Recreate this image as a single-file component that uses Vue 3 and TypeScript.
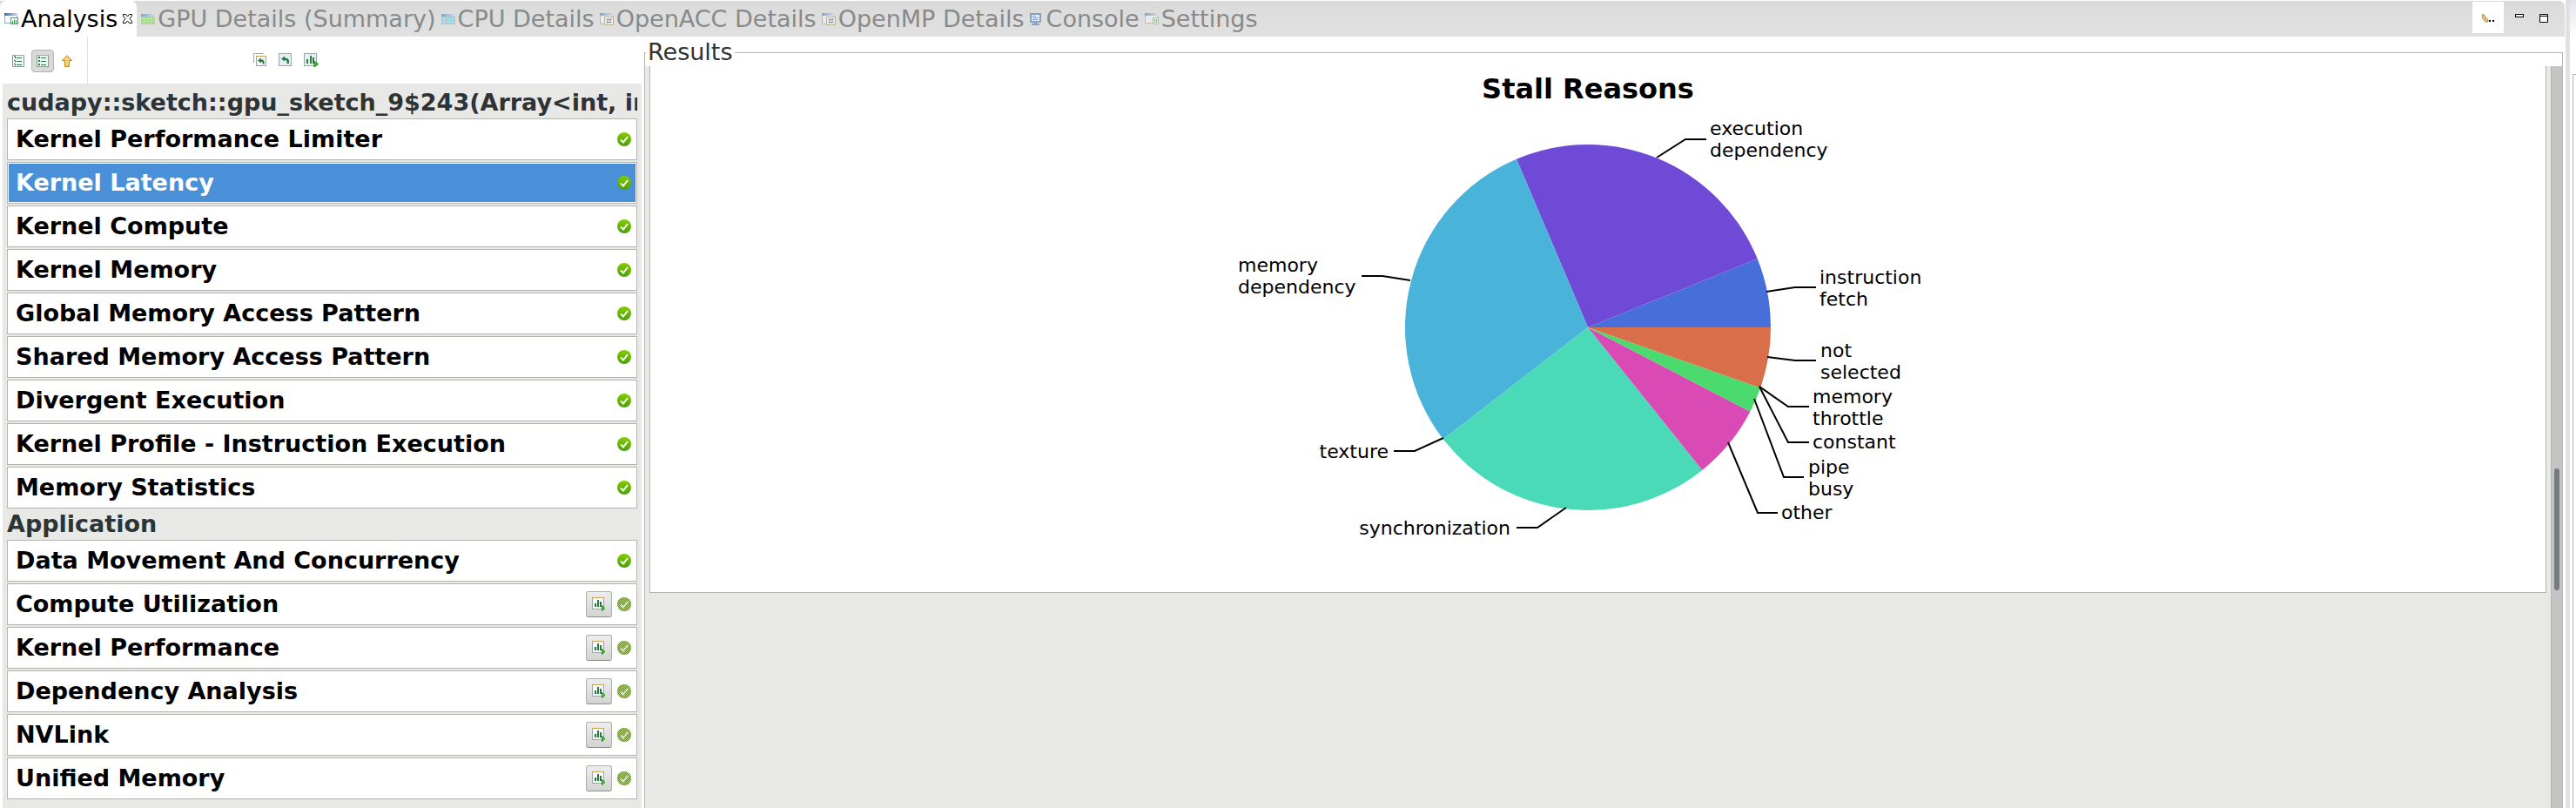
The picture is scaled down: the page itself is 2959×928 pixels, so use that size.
<script setup lang="ts">
import { ref } from 'vue'

type TabIcon = 'analysis' | 'gpu' | 'cpu' | 'hash' | 'console' | 'settings'
interface Tab { label: string; icon: TabIcon }
interface Stage { label: string; done: boolean }
interface Slice { from: number; to: number; color: string }
interface Callout { lines: string[]; points: string; x: number; y: number; end?: boolean }

const tabs: Tab[] = [
  { label: 'Analysis', icon: 'analysis' },
  { label: 'GPU Details (Summary)', icon: 'gpu' },
  { label: 'CPU Details', icon: 'cpu' },
  { label: 'OpenACC Details', icon: 'hash' },
  { label: 'OpenMP Details', icon: 'hash' },
  { label: 'Console', icon: 'console' },
  { label: 'Settings', icon: 'settings' },
]

const groups: { title: string; stages: Stage[] }[] = [
  {
    title: 'cudapy::sketch::gpu_sketch_9$243(Array<int, in',
    stages: [
      'Kernel Performance Limiter', 'Kernel Latency', 'Kernel Compute', 'Kernel Memory',
      'Global Memory Access Pattern', 'Shared Memory Access Pattern', 'Divergent Execution',
      'Kernel Profile - Instruction Execution', 'Memory Statistics',
    ].map(label => ({ label, done: true })),
  },
  {
    title: 'Application',
    stages: [
      { label: 'Data Movement And Concurrency', done: true },
      { label: 'Compute Utilization', done: false },
      { label: 'Kernel Performance', done: false },
      { label: 'Dependency Analysis', done: false },
      { label: 'NVLink', done: false },
      { label: 'Unified Memory', done: false },
    ],
  },
]

const selected = ref('Kernel Latency')

const cx = 424
const cy = 300
const radius = 210

// Angles run counter-clockwise from three o'clock, in degrees.
const slices: Slice[] = [
  { from: 0, to: 22, color: '#486ed9' },
  { from: 22, to: 113, color: '#6e4ad7' },
  { from: 113, to: 217.7, color: '#4ab3da' },
  { from: 217.7, to: 308.7, color: '#4adab7' },
  { from: 308.7, to: 332.6, color: '#da4ab5' },
  { from: 332.6, to: 340.7, color: '#4ada6e' },
  { from: 340.7, to: 360, color: '#d96e4a' },
]

const callouts: Callout[] = [
  { lines: ['execution', 'dependency'], points: '503,105 536,84 560,84', x: 564, y: 79 },
  { lines: ['instruction', 'fetch'], points: '629,259 662,254 686,254', x: 690, y: 250 },
  { lines: ['not', 'selected'], points: '630,334 662,338 686,338', x: 691, y: 334 },
  { lines: ['memory', 'throttle'], points: '621,368 654,391 678,391', x: 682, y: 387 },
  { lines: ['constant'], points: '621,368 654,432 678,432', x: 682, y: 439 },
  { lines: ['pipe', 'busy'], points: '615,382 649,472 672,472', x: 677, y: 468 },
  { lines: ['other'], points: '585,432 619,513 642,513', x: 646, y: 520 },
  { lines: ['synchronization'], points: '399,507 366,530 342,530', x: 335, y: 538, end: true },
  { lines: ['texture'], points: '258,427 225,442 201,442', x: 195, y: 450, end: true },
  { lines: ['memory', 'dependency'], points: '220,246 188,241 164,241', x: 22, y: 236 },
]

function wedge(s: Slice): string {
  const at = (deg: number) => {
    const a = (deg * Math.PI) / 180
    return `${(cx + radius * Math.cos(a)).toFixed(2)} ${(cy - radius * Math.sin(a)).toFixed(2)}`
  }
  return `M${cx} ${cy}L${at(s.from)}A${radius} ${radius} 0 0 0 ${at(s.to)}Z`
}
</script>

<template>
  <div class="window">
    <svg class="defs" width="0" height="0" aria-hidden="true">
      <defs>
        <linearGradient id="caption" x1="0" x2="1" y1="0" y2="0">
          <stop offset="0" stop-color="#2f68b0" />
          <stop offset="1" stop-color="#c9dff2" />
        </linearGradient>
        <linearGradient id="done" x1="0" x2="0" y1="0" y2="1">
          <stop offset="0" stop-color="#86cc00" />
          <stop offset="1" stop-color="#4a9f0a" />
        </linearGradient>
        <pattern id="dither" width="2" height="2" patternUnits="userSpaceOnUse">
          <rect width="1" height="1" fill="#c4c9b8" />
          <rect x="1" y="1" width="1" height="1" fill="#c4c9b8" />
        </pattern>
      </defs>
    </svg>
    <section class="folder">
      <header class="strip">
        <nav class="tabs">
          <button v-for="(t, i) in tabs" :key="t.label" type="button" class="tab" :class="{ active: i === 0 }">
            <svg class="icon" viewBox="0 0 16 14" aria-hidden="true">
              <g v-if="t.icon === 'analysis'">
                <rect x="0.5" y="1.5" width="14" height="10" fill="#f2f9ff" stroke="#8fb3c4" />
                <rect width="15" height="3" fill="url(#caption)" />
                <rect x="7.500" y="5.500" width="8" height="7" fill="#fff" stroke="#7d868e" />
                <path d="M9.500 12V9M11.500 12V7.500M13.500 12V8" stroke="#2f9f4a" fill="none" />
              </g>
              <g v-else-if="t.icon === 'settings'">
                <rect x="0.5" y="1.500" width="14" height="10" fill="#f2f9ff" stroke="#a8a890" />
                <rect width="15" height="3" fill="url(#caption)" />
                <rect x="9.500" y="5.500" width="6" height="7" fill="#fff" stroke="#8d8d78" />
                <path d="M11.500 11V7M13.500 11V7" stroke="#2f9f4a" fill="none" />
              </g>
              <g v-else-if="t.icon === 'gpu'">
                <rect width="16" height="3" y="1" fill="url(#caption)" />
                <rect width="16" height="9" y="4" fill="#5fe028" />
                <path d="M0 6.500H16M0 9.500H16M3.500 4V13M7.500 4V13M11.500 4V13" stroke="#b9d890" />
              </g>
              <g v-else-if="t.icon === 'cpu'">
                <rect width="16" height="3" y="1" fill="url(#caption)" />
                <rect x="0.500" y="4.500" width="15" height="8" fill="#6fdcf8" stroke="#8d9c98" />
                <path d="M0 8.500H16M5.500 4V13M10.500 4V13" stroke="#a3aaa0" />
              </g>
              <g v-else-if="t.icon === 'hash'">
                <rect x="0.500" y="1.500" width="14" height="11" fill="#f6f9fb" stroke="#a39a70" />
                <rect width="15" height="3" fill="url(#caption)" />
                <rect x="5.500" y="4.500" width="10" height="9" fill="#fff" stroke="#9a8448" />
                <path d="M9.500 6L8.500 12M12.500 6L11.500 12M7.500 7.500H13.500M7.500 10.500H13.500" stroke="#555" fill="none" />
              </g>
              <g v-else>
                <rect x="1" y="1" width="11" height="9" fill="#fff" stroke="#3563ad" stroke-width="2" />
                <path d="M3 3.500H7M3 5.500H10M3 7.500H9" stroke="#3563ad" />
                <path d="M5 11H8V12H11V14H2V12H5Z" fill="#3563ad" />
              </g>
            </svg>
            <span>{{ t.label }}</span>
            <svg v-if="i === 0" class="close" viewBox="0 0 11 11" aria-hidden="true">
              <path d="M.5.500H3.500L5.500 3L7.500.500H10.500V2.500L8 5.500L10.500 8.500V10.500H7.500L5.500 8L3.500 10.500H.5V8.500L3 5.500L.5 2.500Z" fill="#fff" stroke="#000" />
            </svg>
          </button>
        </nav>
        <div class="controls">
          <button type="button" class="pencil" aria-label="View menu">
            <svg viewBox="0 0 15 11" width="15" height="11">
              <path d="M0 0L2 1L7 7V9H4L0 4Z" fill="#e9c37a" stroke="#8a6427" stroke-width="0.700" />
              <rect x="8" y="7" width="2" height="2" /><rect x="12" y="7" width="2" height="2" />
            </svg>
          </button>
          <button type="button" aria-label="Minimize">
            <svg viewBox="0 0 10 10" width="10" height="10"><rect x="0.500" y="0.500" width="9" height="3" fill="#fff" stroke="#000" /></svg>
          </button>
          <button type="button" aria-label="Maximize">
            <svg viewBox="0 0 10 10" width="10" height="10"><path d="M.5.500H9.500V9.500H.5ZM.5 2.500H9.500" fill="#fff" stroke="#000" /></svg>
          </button>
        </div>
      </header>

      <div class="body">
        <aside class="side">
          <div class="toolbar">
            <div class="tools modes">
              <button type="button" aria-label="Guided analysis">
                <svg viewBox="0 0 14 14" width="14" height="14">
                  <rect x="0.500" y="0.500" width="13" height="13" fill="#eef5fc" stroke="#8e9c98" /><path d="M0 .5H14" stroke="#c5a75a" />
                  <path d="M5 3.500H11M5 7.500H11M5 11.500H11" stroke="#2e7d3c" /><path d="M2 1.500H3.500V4.500M2 6.500H3.500V8.500M2 10.500H3.500V12.500" stroke="#2e7d3c" fill="none" />
                </svg>
              </button>
              <button type="button" class="pressed" aria-label="Unguided analysis" aria-pressed="true">
                <svg viewBox="0 0 14 14" width="14" height="14">
                  <rect x="0.500" y="0.500" width="13" height="13" fill="#eef5fc" stroke="#8e9c98" /><path d="M0 .5H14" stroke="#c5a75a" />
                  <path d="M5 3.500H11M5 7.500H11M5 11.500H11" stroke="#2e7d3c" /><path d="M2 3H4M2 7H4M2 11H4" stroke="#2e7d3c" stroke-width="2" />
                </svg>
              </button>
              <button type="button" aria-label="Up">
                <svg viewBox="0 0 14 14" width="14" height="14">
                  <path d="M7 .7L12.500 6.500H9.500V13.500H4.500V6.500H1.500Z" fill="#fbd26a" stroke="#b9842a" />
                </svg>
              </button>
            </div>
            <div class="tools actions">
              <button type="button" aria-label="Reset all">
                <svg viewBox="0 0 16 16" width="16" height="16">
                  <path d="M.5 11V.5H11.500" fill="none" stroke="#c5a75a" /><rect x="3.500" y="3.500" width="11" height="11" fill="#eef5fc" stroke="#9aa6a8" /><path d="M3 3.500H15" stroke="#c5a75a" />
                  <path d="M5 8.500L9 5.500V7.500C12 7.500 13 9 12.500 12.500H10.500C11 10.500 10.500 9.700 9 9.700V11.500Z" fill="#2a7a3a" />
                </svg>
              </button>
              <button type="button" aria-label="Reset">
                <svg viewBox="0 0 16 16" width="16" height="16">
                  <rect x="0.500" y="0.500" width="14" height="14" fill="#e4effa" stroke="#9aa6a8" /><path d="M0 .5H15" stroke="#c5a75a" />
                  <path d="M3 6.500L7 3.500V5.500C11 5.500 12.500 7.500 12 12H9.500C10 9 9.500 8 7 8V9.500Z" fill="#2a7a3a" />
                </svg>
              </button>
              <button type="button" aria-label="Run analysis">
                <svg viewBox="0 0 17 17" width="17" height="17">
                  <rect x="0.500" y="0.500" width="14" height="14" fill="#e4effa" stroke="#9aa6a8" /><path d="M0 .5H15" stroke="#c5a75a" />
                  <path d="M4 12V7M8 12V3M11 12V5" stroke="#2a7a3a" stroke-width="2" /><path d="M12 9.500L16.500 12.500L12 16Z" fill="#3fc41c" stroke="#1c8c1c" />
                </svg>
              </button>
            </div>
          </div>

          <div class="stages">
            <template v-for="g in groups" :key="g.title">
              <h2 class="heading">{{ g.title }}</h2>
              <ul class="list">
                <li v-for="s in g.stages" :key="s.label" class="stage" :class="{ selected: s.label === selected }">
                  <button type="button" class="name" @click="selected = s.label">{{ s.label }}</button>
                  <button v-if="!s.done" type="button" class="run" :aria-label="`Run ${s.label}`">
                    <svg viewBox="0 0 16 16" width="16" height="16">
                      <rect x="0.500" y="0.500" width="13" height="13" fill="#f4faff" stroke="#9aa6a8" /><path d="M0 .5H14" stroke="#c5a75a" />
                      <path d="M4 11V7M7 11V3M10 11V5" stroke="#2a7a3a" stroke-width="2" /><path d="M11.500 9.500L15 12.500L11.500 15.500Z" fill="#5ad02c" stroke="#1c8c1c" />
                    </svg>
                  </button>
                  <svg class="mark" viewBox="0 0 16 16" aria-hidden="true">
                    <circle cx="8" cy="8" r="8" :fill="s.done ? 'url(#done)' : '#5f8420'" />
                    <path d="M4 8.500L7 11.500L12 5" fill="none" stroke="#fff" stroke-width="2" />
                    <circle v-if="!s.done" cx="8" cy="8" r="8" fill="url(#dither)" />
                  </svg>
                </li>
              </ul>
            </template>
          </div>
        </aside>

        <fieldset class="results">
          <legend>Results</legend>
          <div class="viewport">
            <div class="page">
              <div class="canvas">
                <svg class="chart" viewBox="0 0 848 604" role="img" aria-label="Stall Reasons">
                  <text class="title" x="424" y="37" text-anchor="middle">Stall Reasons</text>
                  <path v-for="s in slices" :key="s.from" :d="wedge(s)" :fill="s.color" />
                  <g v-for="c in callouts" :key="c.points">
                    <polyline :points="c.points" />
                    <text v-for="(line, n) in c.lines" :key="line" :x="c.x" :y="c.y + n * 25" :text-anchor="c.end ? 'end' : 'start'">{{ line }}</text>
                  </g>
                </svg>
              </div>
            </div>
            <div class="scrollbar"><div class="thumb"></div></div>
          </div>
        </fieldset>
      </div>
    </section>
    <div class="neighbour"><div class="neighbour-frame"></div></div>
  </div>
</template>

<style scoped>
.window {
  display: flex;
  height: 100vh;
  overflow: hidden;
  background: #e1e1e1;
  color: #2e3436;
  font-family: "DejaVu Sans", sans-serif;
  font-size: 27px;
}
button {
  margin: 0;
  padding: 0;
  border: 0;
  background: none;
  color: inherit;
  font: inherit;
}
svg {
  display: block;
  flex: none;
}
.folder {
  flex: 1;
  min-width: 0;
  display: flex;
  flex-direction: column;
  margin-right: 5px;
  background: #fff;
}
.strip {
  display: flex;
  justify-content: space-between;
  height: 42px;
  box-sizing: border-box;
  border-top: 1px solid #fff;
  border-right: 1px solid #fff;
  border-top-right-radius: 8px;
  background: linear-gradient(#dadada, #e1e1e1);
}
.tabs {
  display: flex;
}
.tab {
  display: flex;
  align-items: center;
  gap: 3px;
  padding: 0 3px;
  color: #888a8a;
  white-space: nowrap;
}
.tab.active {
  margin-right: 2px;
  padding: 0 5px;
  border-radius: 7px 7px 0 0;
  background: #fff;
  color: #000;
}
.icon {
  width: 16px;
  height: 14px;
  opacity: 0.5;
}
.active .icon {
  opacity: 1;
}
.close {
  width: 11px;
  height: 11px;
  margin-left: 3px;
}
.controls {
  display: flex;
  align-items: flex-start;
  gap: 8px;
  padding: 1px 14px 0 0;
}
.controls button {
  display: flex;
  justify-content: center;
  width: 20px;
  padding-top: 14px;
}
.controls .pencil {
  width: 36px;
  height: 36px;
  background: #fff;
}
.body {
  flex: 1;
  min-height: 0;
  display: flex;
}
.side {
  flex: 0 0 740px;
  min-width: 0;
  display: flex;
  flex-direction: column;
  box-sizing: border-box;
  padding: 0 3px;
}
.toolbar {
  display: flex;
  height: 54px;
}
.tools {
  display: flex;
  align-items: center;
}
.modes {
  gap: 1px;
  width: 98px;
  box-sizing: border-box;
  padding: 2px 0 0 4px;
  border-right: 1px solid #e1e1e1;
}
.modes button {
  display: flex;
  justify-content: center;
  width: 28px;
  padding: 5px 0;
}
.modes .pressed {
  width: 26px;
  border: 1px solid #b4b4b2;
  border-radius: 4px;
  background: #d9d9d8;
}
.actions {
  gap: 13px;
  padding-left: 190px;
}
.stages {
  flex: 1;
  padding: 0 5px;
  background: #e8e8e6;
}
.heading {
  margin: 0;
  height: 40px;
  line-height: 43px;
  overflow: hidden;
  white-space: nowrap;
  font-size: 27px;
}
.list + .heading {
  height: 36px;
  line-height: 36px;
}
.list {
  display: flex;
  flex-direction: column;
  gap: 2px;
  margin: 0;
  padding: 0;
  list-style: none;
}
.stage {
  display: flex;
  align-items: center;
  gap: 6px;
  height: 48px;
  box-sizing: border-box;
  padding: 0 6px 0 9px;
  border: 1px solid #b4b4b1;
  background: #fff;
  color: #000;
}
.selected {
  background: #4a90d9;
  box-shadow: inset 0 0 0 1px #fff;
  color: #fff;
}
.name {
  flex: 1;
  padding-bottom: 2px;
  text-align: left;
  font-weight: bold;
}
.run {
  display: grid;
  place-items: center;
  width: 30px;
  height: 30px;
  border: 1px solid #aeaeab;
  border-bottom-color: #8e8e88;
  border-radius: 3px;
  background: linear-gradient(#ededed, #d3d3d2);
}
.mark {
  width: 16px;
  height: 16px;
}
.results {
  flex: 1;
  min-width: 0;
  display: flex;
  flex-direction: column;
  margin: 0 3px 0 0;
  padding: 0;
  border: 1px solid #b4b4b1;
  border-bottom: 0;
}
.results legend {
  margin-left: 1px;
  padding: 0 2px;
  line-height: 36px;
}
.viewport {
  height: calc(100% + 2px);
  display: flex;
  margin-top: -2px;
  background: #e8e8e6;
}
.page {
  flex: 1;
  padding: 0 5px;
}
.canvas {
  display: flex;
  justify-content: center;
  padding-right: 24px;
  border: 1px solid #b4b4b1;
  border-top: 0;
  background: #fff;
}
.chart {
  width: 848px;
  height: 604px;
}
.chart text {
  fill: #000;
  font-size: 22px;
}
.chart .title {
  font-size: 32px;
  font-weight: bold;
}
.chart polyline {
  fill: none;
  stroke: #000;
  stroke-width: 2;
}
.scrollbar {
  width: 12px;
  padding-top: 462px;
  border-left: 1px solid #b4b4b1;
  background: #c3c4c4;
}
.thumb {
  width: 6px;
  height: 140px;
  margin: 0 auto;
  border-radius: 3px;
  background: #777b7d;
}
.neighbour {
  width: 7px;
  box-sizing: border-box;
  padding: 85px 0 0 3px;
  border-top-left-radius: 6px;
  background: linear-gradient(#e1e3ec, #fff 42px);
}
.neighbour-frame {
  height: 100%;
  border: 1px solid #b4b4b1;
  border-right: 0;
}
</style>

<style>
body {
  margin: 0;
}
</style>
